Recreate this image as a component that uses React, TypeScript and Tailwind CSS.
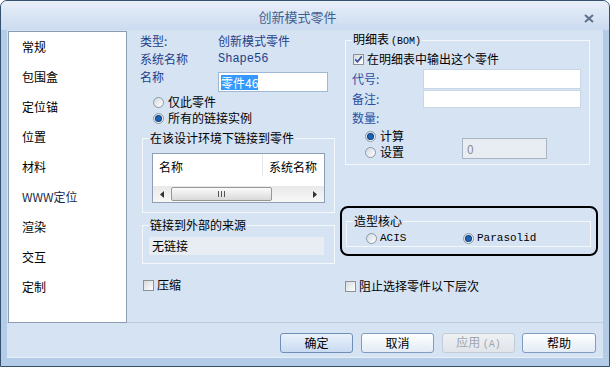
import React from 'react';

const Radio = ({ on }: { on?: boolean }) => (
  <span className="w-[11px] h-[11px] rounded-full border border-[#8b97a6] bg-linear-to-br from-[#d3d9e0] to-white flex items-center justify-center shrink-0">
    {on && <span className="w-[5px] h-[5px] rounded-full bg-[#1c62b6] ring-1 ring-[#0f3f7c]" />}
  </span>
);

const Check = ({ on }: { on?: boolean }) => (
  <span className="w-[11px] h-[11px] border border-[#8e9297] bg-linear-to-br from-[#d8dadd] to-white flex items-center justify-center shrink-0">
    {on && (
      <svg width="9" height="9" viewBox="0 0 9 9">
        <path d="M1.2 4.4 L3.5 6.8 L7.8 1.4" stroke="#3050a0" strokeWidth="1.7" fill="none" />
      </svg>
    )}
  </span>
);

const Btn = ({ label, primary, disabled, className = '' }: { label: React.ReactNode; primary?: boolean; disabled?: boolean; className?: string }) => (
  <button
    className={`w-[73px] h-[20px] rounded-[3px] border flex items-center justify-center text-[12px] ${className} ${
      disabled
        ? 'border-[#c3ccd6] bg-linear-to-b from-[#eef1f4] to-[#e1e5ea] text-[#9fa6ae]'
        : primary
        ? 'border-[#6f8fb9] bg-linear-to-b from-[#e9f1fb] to-[#c9dbf1] text-black'
        : 'border-[#7f9cc2] bg-linear-to-b from-white to-[#e3ebf5] text-black'
    }`}
  >
    {label}
  </button>
);

const NAV = ['常规', '包围盒', '定位锚', '位置', '材料', 'WWW定位', '渲染', '交互', '定制'];

export default function App() {
  return (
    <div className="w-[610px] h-[367px] border border-[#34506f] rounded-t-[7px] overflow-hidden flex flex-col bg-[#b5cce9] text-[12px] leading-[16px] text-black font-['Noto_Sans_CJK_SC','Noto_Sans',sans-serif]">
      {/* title bar */}
      <div className="h-[29px] shrink-0 bg-linear-to-b from-[#e8eff9] to-[#cbdbf0] flex items-center">
        <div className="flex-1" />
        <span className="text-[#405f92] text-[13px] mt-[3px]">创新模式零件</span>
        <div className="flex-1 flex justify-end pr-[15px] pt-[5px]">
          <svg width="10" height="9" viewBox="0 0 10 9">
            <path d="M1 1 L9 8 M9 1 L1 8" stroke="#5f7088" strokeWidth="2" />
          </svg>
        </div>
      </div>

      <div className="flex-1 flex flex-col px-[6px] pb-[8px]">
        <div className="flex-1 bg-[#d5e3f3] flex flex-col">
          <div className="flex h-[293px] border-b border-[#bccde2]">
            {/* nav list */}
            <div className="ml-[1px] mt-[1px] w-[119px] h-[292px] bg-white border border-[#8d9db1] pl-[13px] pt-[7px] flex flex-col">
              {NAV.map(n => (
                <div key={n} className="h-[30px]">
                  <span className={n === 'WWW定位' ? 'text-[#1a2a4a]' : ''}>{n}</span>
                </div>
              ))}
            </div>

            {/* left column */}
            <div className="w-[208px] pl-[13px] flex flex-col">
              <div className="mt-[3px] h-[17px] flex text-[#1f4189]">
                <span className="w-[78px]">类型:</span>
                <span>创新模式零件</span>
              </div>
              <div className="h-[17px] flex items-center text-[#1f4189]">
                <span className="w-[78px]">系统名称</span>
                <span className="font-['Liberation_Mono',monospace] text-[12px]">Shape56</span>
              </div>
              <div className="mt-[5px] h-[20px] flex">
                <span className="w-[78px] -mt-[3px] text-[#1f4189]">名称</span>
                <div className="w-[110px] h-[20px] bg-white border border-[#9fb7d4] flex items-center pl-[2px]">
                  <span className="bg-[#3399ff] text-white leading-[15px]">零件46</span>
                </div>
              </div>
              <div className="mt-[2px] h-[16px] pl-[13px] flex items-center gap-[4px]">
                <Radio />
                <span>仅此零件</span>
              </div>
              <div className="h-[16px] pl-[13px] flex items-center gap-[4px]">
                <Radio on />
                <span>所有的链接实例</span>
              </div>

              <fieldset className="mt-[4px] ml-[2px] w-[193px] border border-[#f3f8fd] pb-[9px]">
                <legend className="ml-[6px] px-[1px]">在该设计环境下链接到零件</legend>
                <div className="ml-[9px] mt-[7px] w-[173px] h-[50px] bg-white border border-[#8d9fb5] flex flex-col">
                  <div className="flex h-[22px]">
                    <div className="w-[110px] pl-[6px] pt-[5px] border-r border-[#e4e6e9]">名称</div>
                    <div className="pl-[6px] pt-[5px] whitespace-nowrap overflow-hidden">系统名称</div>
                  </div>
                  <div className="flex-1" />
                  <div className="h-[16px] bg-linear-to-b from-[#e9e9e9] to-[#f7f7f7] flex items-center">
                    <div className="w-[18px] flex justify-center">
                      <svg width="4" height="7" viewBox="0 0 4 7"><path d="M4 0 L0 3.5 L4 7 Z" fill="#333" /></svg>
                    </div>
                    <div className="w-[101px] h-[14px] rounded-[2px] border border-[#979797] bg-linear-to-b from-[#fbfbfb] to-[#d9d9d9] flex items-center justify-center">
                      <svg width="7" height="6" viewBox="0 0 7 6">
                        <path d="M0.5 0 V6 M3.5 0 V6 M6.5 0 V6" stroke="#555" strokeWidth="1" />
                      </svg>
                    </div>
                    <div className="flex-1" />
                    <div className="w-[18px] flex justify-center">
                      <svg width="4" height="7" viewBox="0 0 4 7"><path d="M0 0 L4 3.5 L0 7 Z" fill="#333" /></svg>
                    </div>
                  </div>
                </div>
              </fieldset>

              <fieldset className="mt-[4px] ml-[2px] w-[193px] border border-[#f3f8fd] pb-[8px]">
                <legend className="ml-[6px] px-[1px]">链接到外部的来源</legend>
                <div className="ml-[6px] mt-[4px] w-[175px] h-[18px] bg-[#e8edf3] flex items-center pl-[3px]">无链接</div>
              </fieldset>

              <div className="mt-[13px] ml-[3px] h-[16px] flex items-center gap-[3px]">
                <Check />
                <span>压缩</span>
              </div>
            </div>

            {/* right column */}
            <div className="ml-[5px] w-[258px] flex flex-col">
              <fieldset className="mt-[1px] ml-[5px] w-[245px] border border-[#f3f8fd] pb-[4px]">
                <legend className="ml-[6px] px-[1px]">
                  明细表<span className="font-['Liberation_Mono',monospace] text-[10px] ml-[2px]">(BOM)</span>
                </legend>
                <div className="mt-[1px] h-[16px] pl-[7px] flex items-center gap-[3px]">
                  <Check on />
                  <span>在明细表中输出这个零件</span>
                </div>
                <div className="mt-[2px] h-[20px] flex items-center">
                  <span className="w-[77px] pl-[6px] text-[#2a50a2]">代号:</span>
                  <div className="w-[158px] h-[20px] bg-white border border-[#c9d6e6]" />
                </div>
                <div className="mt-[1px] h-[18px] flex items-center">
                  <span className="w-[77px] pl-[6px] text-[#2a50a2]">备注:</span>
                  <div className="w-[158px] h-[18px] bg-white border border-[#c9d6e6]" />
                </div>
                <div className="mt-[2px] h-[16px] pl-[6px] text-[#2a50a2]">数量:</div>
                <div className="mt-[2px] flex">
                  <div className="ml-[19px] w-[97px] flex flex-col">
                    <div className="h-[16px] flex items-center gap-[4px]">
                      <Radio on />
                      <span>计算</span>
                    </div>
                    <div className="h-[16px] flex items-center gap-[4px]">
                      <Radio />
                      <span>设置</span>
                    </div>
                  </div>
                  <div className="mt-[10px] w-[85px] h-[21px] bg-[#e8edf3] border border-[#a9b4c2] pl-[4px] flex items-center text-[#8a8f96]">0</div>
                </div>
              </fieldset>

              <div className="mt-[41px] w-[258px] h-[50px] border-2 border-black rounded-[8px] flex flex-col">
                <fieldset className="mt-[5px] ml-[4px] w-[245px] border border-[#f3f8fd]">
                  <legend className="ml-[6px] px-[1px]">造型核心</legend>
                  <div className="mt-[1px] h-[16px] pl-[19px] flex items-center font-['Liberation_Mono',monospace] text-[11px]">
                    <div className="w-[97px] flex items-center gap-[3px]">
                      <Radio />
                      <span>ACIS</span>
                    </div>
                    <div className="flex items-center gap-[3px]">
                      <Radio on />
                      <span>Parasolid</span>
                    </div>
                  </div>
                </fieldset>
              </div>

              <div className="mt-[22px] ml-[5px] h-[16px] flex items-center gap-[3px]">
                <Check />
                <span>阻止选择零件以下层次</span>
              </div>
            </div>
          </div>

          {/* button bar */}
          <div className="flex-1 flex items-start justify-end pt-[10px] pr-[7px] border-b border-[#e6eef8]">
            <Btn label="确定" primary />
            <Btn label="取消" className="ml-[8px]" />
            <Btn
              label={<span>应用 <span className="font-['Liberation_Mono',monospace] text-[10px]">(A)</span></span>}
              disabled
              className="ml-[8px]"
            />
            <Btn label="帮助" className="ml-[7px] w-[74px]" />
          </div>
        </div>
      </div>
    </div>
  );
}
